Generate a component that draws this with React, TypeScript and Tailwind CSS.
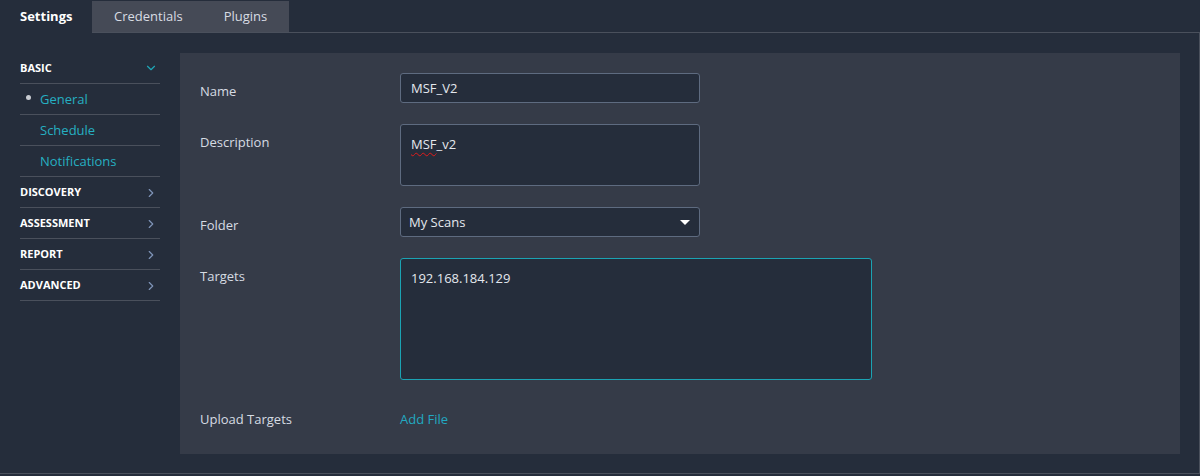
import { ChevronDown, ChevronRight } from 'lucide-react';

const FONT = "font-['Open_Sans',_'Liberation_Sans',_sans-serif]";

const sections = [
  { name: 'BASIC', open: true, items: ['General', 'Schedule', 'Notifications'] },
  { name: 'DISCOVERY', open: false, items: [] },
  { name: 'ASSESSMENT', open: false, items: [] },
  { name: 'REPORT', open: false, items: [] },
  { name: 'ADVANCED', open: false, items: [] },
];

function Sidebar() {
  return (
    <nav className="w-[140px] shrink-0">
      {sections.map((s) => (
        <div key={s.name}>
          <div className="flex h-[31px] items-center justify-between border-b border-[#4a505c] pr-[2px]">
            <span className="text-[11px] font-bold text-white">{s.name}</span>
            {s.open ? (
              <ChevronDown size={14} strokeWidth={2} className="text-[#1ea7b8]" />
            ) : (
              <ChevronRight size={14} strokeWidth={2} className="mt-[2px] text-[#7f93b8]" />
            )}
          </div>
          {s.items.map((item, i) => (
            <div
              key={item}
              className="relative flex h-[31px] items-center border-b border-[#4a505c] pl-[20px] pt-[1px] text-[13px] text-[#25b0c2]"
            >
              {i === 0 && (
                <span className="absolute left-[6px] top-[11px] h-[5px] w-[5px] rounded-full bg-[#c9ccd2]" />
              )}
              {item}
            </div>
          ))}
        </div>
      ))}
    </nav>
  );
}

function Row({ label, children }: { label: string; children: React.ReactNode }) {
  return (
    <div className="flex items-start">
      <div className="w-[200px] shrink-0 pt-[9px] leading-[18px] text-[#d6dbe3]">{label}</div>
      <div>{children}</div>
    </div>
  );
}

// shared input look; border colour is set per field
const field = 'rounded-[3px] border bg-[#252d3b] text-[#e4e8ee] leading-[18px]';

export default function App() {
  return (
    <div className={`${FONT} h-[476px] w-[1200px] bg-[#252d3b] text-[13px]`}>
      {/* Tabs */}
      <div className="flex h-[33px] pt-[1px]">
        <div className="flex w-[92px] items-center pl-[20px] font-bold text-white">Settings</div>
        <div className="flex items-center border-b border-[#4a505c] bg-[#454a56] text-[#d8dce3]">
          <div className="pl-[22px] pr-[20px]">Credentials</div>
          <div className="pl-[21px] pr-[22px]">Plugins</div>
        </div>
        <div className="flex-1 border-b border-[#4a505c]" />
      </div>

      {/* Body */}
      <div className="flex h-[441px] gap-[20px] border-b border-r border-[#4a505c] pb-[19px] pl-[20px] pr-[19px] pt-[20px]">
        <Sidebar />

        <div className="flex flex-1 flex-col gap-[21px] bg-[#353b48] px-[20px] pt-[20px]">
          <Row label="Name">
            <div className={`${field} flex h-[30px] w-[300px] items-center border-[#5e6b80] px-[10px]`}>MSF_V2</div>
          </Row>

          <Row label="Description">
            <div className={`${field} h-[62px] w-[300px] border-[#5e6b80] px-[10px] pt-[10px]`}>
              <span className="underline decoration-[#e01b1b] decoration-wavy decoration-1 underline-offset-[3px]">MSF</span>_v2
            </div>
          </Row>

          <Row label="Folder">
            <div className={`${field} flex h-[30px] w-[300px] items-center justify-between border-[#5e6b80] pl-[8px] pr-[9px]`}>
              My Scans
              <span className="h-0 w-0 border-x-[5px] border-t-[5px] border-x-transparent border-t-white" />
            </div>
          </Row>

          <Row label="Targets">
            <div className={`${field} h-[122px] w-[472px] border-[#1ba3b3] px-[10px] pt-[10px]`}>
              192.168.184.129
            </div>
          </Row>

          <Row label="Upload Targets">
            <div className="pt-[9px] leading-[18px] text-[#22a9c1]">Add File</div>
          </Row>
        </div>
      </div>
    </div>
  );
}
